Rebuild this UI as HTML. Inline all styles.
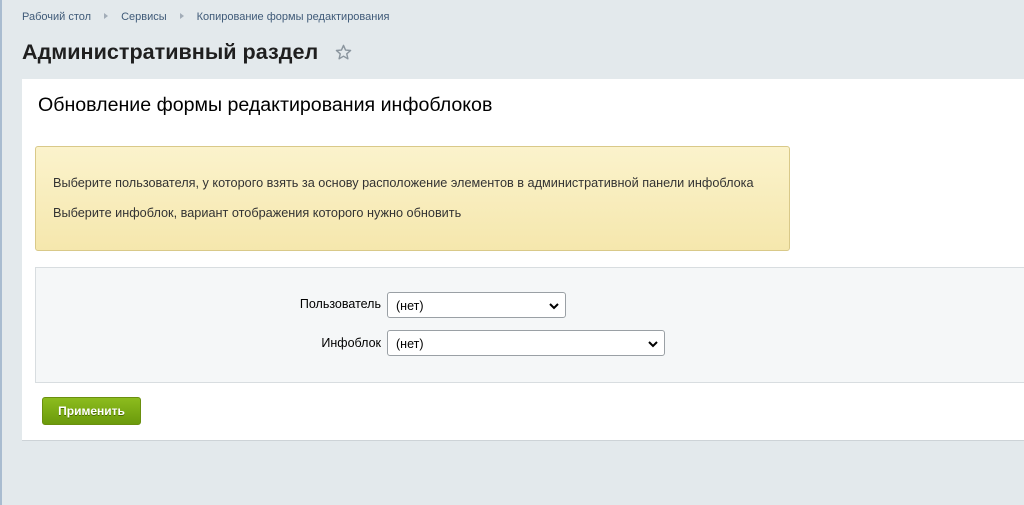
<!DOCTYPE html>
<html><head><meta charset="utf-8"><style>
*{margin:0;padding:0;box-sizing:border-box}
body{width:1024px;height:505px;overflow:hidden;background:#e3e9ec;font-family:"Liberation Sans",Arial,sans-serif;position:relative}
.abs{position:absolute}
.lb{left:0;top:0;width:2px;height:505px;background:#a9bcd0}
.bc{top:11px;left:22px;font-size:11px;color:#3f5a78;white-space:nowrap}
.bc span.sep{display:inline-block;width:0;height:0;border-left:4px solid #a3adb8;border-top:3px solid transparent;border-bottom:3px solid transparent;margin:0 13px 1px 13px}
h1{position:absolute;top:39px;left:22px;font-size:21.6px;font-weight:bold;color:#1f1f1f;white-space:nowrap}
.card{left:22px;top:79px;width:1002px;height:362px;background:#fff;border-bottom:1px solid #cdd3d7}
.title{left:38px;top:94px;font-size:19.6px;color:#000;white-space:nowrap}
.note{left:35px;top:146px;width:755px;height:105px;background:linear-gradient(#fbf3cc,#f5e7ad);border:1px solid #d9c989;border-radius:3px;font-size:12.7px;color:#333}
.note p{position:absolute;left:17px;white-space:nowrap}
.form{left:35px;top:267px;width:989px;height:116px;background:#f5f7f8;border-top:1px solid #d8dde0;border-bottom:1px solid #d8dde0;border-left:1px solid #d8dde0}
.lbl{font-size:12.5px;color:#000;text-align:right;width:200px}
.sel{height:26px;border:1px solid #9aa0a5;border-radius:3px;background:#fff;font-size:12.5px;padding:6px 0 0 8px;color:#000}
.sel svg{position:absolute;right:6px;top:9px}
.btn{left:42px;top:397px;width:99px;height:28px;background:linear-gradient(#8cbc1e,#6b9a0c);border:1px solid #6a8f0e;border-radius:3px;color:#fff;font-weight:bold;font-size:12px;text-align:center;line-height:26px;text-shadow:0 1px 0 #4a6a00}
</style></head><body>
<div class="abs lb"></div>
<div class="abs bc">Рабочий стол<span class="sep"></span>Сервисы<span class="sep"></span>Копирование формы редактирования</div>
<h1>Административный раздел</h1>
<svg class="abs" style="left:335px;top:44px" width="17" height="17" viewBox="0 0 24 24"><path d="M12 2l2.9 6.6 7.1.6-5.4 4.7 1.6 7-6.2-3.7-6.2 3.7 1.6-7L2 9.2l7.1-.6z" fill="none" stroke="#8a959e" stroke-width="2" stroke-linejoin="round"/></svg>
<div class="abs card"></div>
<div class="abs title">Обновление формы редактирования инфоблоков</div>
<div class="abs note">
<p style="top:29px">Выберите пользователя, у которого взять за основу расположение элементов в административной панели инфоблока</p>
<p style="top:59px">Выберите инфоблок, вариант отображения которого нужно обновить</p>
</div>
<div class="abs form"></div>
<div class="abs lbl" style="left:181px;top:297px">Пользователь</div>
<div class="abs sel" style="left:387px;top:292px;width:179px">(нет)<svg width="10" height="8" viewBox="0 0 10 8"><path d="M1 2l4 4 4-4" stroke="#000" stroke-width="2" fill="none"/></svg></div>
<div class="abs lbl" style="left:181px;top:336px">Инфоблок</div>
<div class="abs sel" style="left:387px;top:330px;width:278px">(нет)<svg width="10" height="8" viewBox="0 0 10 8"><path d="M1 2l4 4 4-4" stroke="#000" stroke-width="2" fill="none"/></svg></div>
<div class="abs btn">Применить</div>
</body></html>
